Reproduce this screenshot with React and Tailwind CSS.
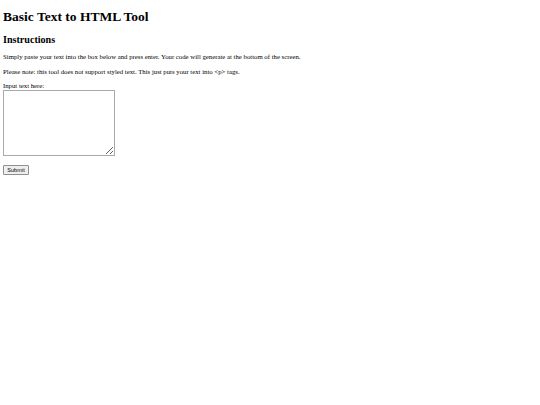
export default function App() {
  return (
    <div className="min-h-[405px] bg-white px-[3px] pt-px text-black font-['Liberation_Serif',serif]">
      <h1 className="mt-[8px] mb-[9.5px] text-[13.5px] font-bold leading-[15.5px]">Basic Text to HTML Tool</h1>
      <h2 className="mt-0 mb-[7.5px] text-[10.1px] font-bold leading-[11.6px]">Instructions</h2>
      <p className="mb-[6.75px] text-[6.75px] leading-[7.8px]">
        Simply paste your text into the box below and press enter. Your code will generate at the bottom of the screen.
      </p>
      <p className="mb-[6.75px] text-[6.75px] leading-[7.8px]">
        Please note: this tool does not support styled text. This just puts your text into &lt;p&gt; tags.
      </p>
      <div className="flex flex-col items-start">
        <label className="text-[6.75px] leading-[7.8px]">Input text here:</label>
        <textarea className="mt-[0.5px] h-[66px] w-[112px] resize border border-[#a9a9a9] bg-white outline-none" />
        <button className="mt-[9px] h-[10px] w-[26px] rounded-[1px] border border-[#8f8f8f] bg-[#efefef] text-[5.6px] leading-[8px] font-['Liberation_Sans',sans-serif]">
          Submit
        </button>
      </div>
    </div>
  )
}
